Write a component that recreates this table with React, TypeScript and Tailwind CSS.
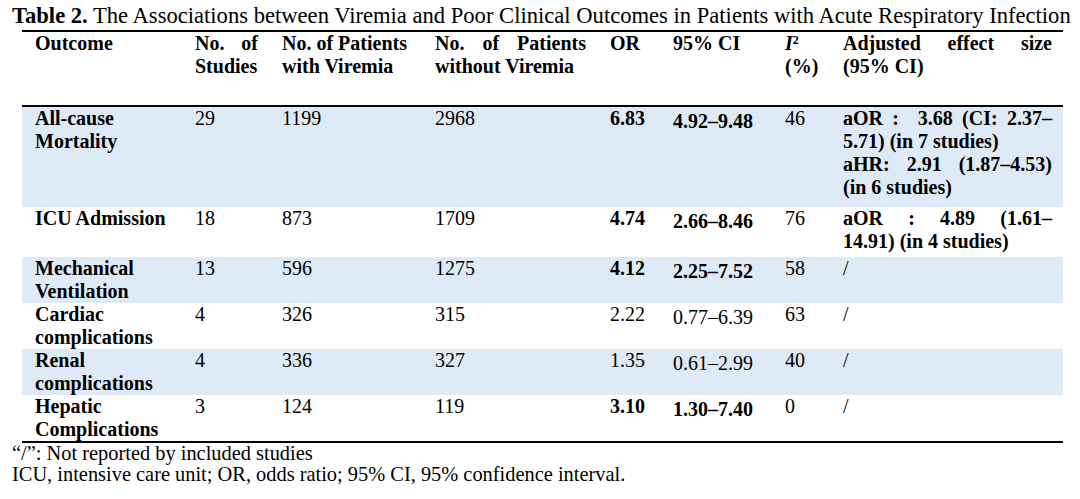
const shade = "bg-[#deeaf6]";

// one line stretched to the full cell width
const J = ({ children }: { children: React.ReactNode }) => (
  <span className="block text-justify [text-align-last:justify]">{children}</span>
);
const L = ({ children }: { children: React.ReactNode }) => <span className="block">{children}</span>;

const td = "align-top pl-[13px] pr-[11px] pt-0 pb-0";

interface Row {
  outcome: string[];
  studies: string;
  withV: string;
  withoutV: string;
  or: string;
  ci: string;
  sig: boolean;
  i2: string;
  adjusted: React.ReactNode;
  h: string;
  shaded: boolean;
}

const rows: Row[] = [
  {
    outcome: ["All-cause", "Mortality"],
    studies: "29",
    withV: "1199",
    withoutV: "2968",
    or: "6.83",
    ci: "4.92–9.48",
    sig: true,
    i2: "46",
    adjusted: (
      <div className="font-bold">
        <J>aOR :&nbsp; 3.68 (CI: 2.37–</J>
        <L>5.71) (in 7 studies)</L>
        <J>aHR: 2.91 (1.87–4.53)</J>
        <L>(in 6 studies)</L>
      </div>
    ),
    h: "h-[101px]",
    shaded: true,
  },
  {
    outcome: ["ICU Admission"],
    studies: "18",
    withV: "873",
    withoutV: "1709",
    or: "4.74",
    ci: "2.66–8.46",
    sig: true,
    i2: "76",
    adjusted: (
      <div className="font-bold">
        <J>aOR : 4.89 (1.61–</J>
        <L>14.91) (in 4 studies)</L>
      </div>
    ),
    h: "h-[50px]",
    shaded: false,
  },
  {
    outcome: ["Mechanical", "Ventilation"],
    studies: "13",
    withV: "596",
    withoutV: "1275",
    or: "4.12",
    ci: "2.25–7.52",
    sig: true,
    i2: "58",
    adjusted: "/",
    h: "h-[45px]",
    shaded: true,
  },
  {
    outcome: ["Cardiac", "complications"],
    studies: "4",
    withV: "326",
    withoutV: "315",
    or: "2.22",
    ci: "0.77–6.39",
    sig: false,
    i2: "63",
    adjusted: "/",
    h: "h-[46px]",
    shaded: false,
  },
  {
    outcome: ["Renal", "complications"],
    studies: "4",
    withV: "336",
    withoutV: "327",
    or: "1.35",
    ci: "0.61–2.99",
    sig: false,
    i2: "40",
    adjusted: "/",
    h: "h-[45px]",
    shaded: true,
  },
  {
    outcome: ["Hepatic", "Complications"],
    studies: "3",
    withV: "124",
    withoutV: "119",
    or: "3.10",
    ci: "1.30–7.40",
    sig: true,
    i2: "0",
    adjusted: "/",
    h: "h-[46px]",
    shaded: false,
  },
];

export default function App() {
  return (
    <div className="min-h-[499px] w-[1080px] bg-white pl-[12px] pt-[4px] text-black font-['Liberation_Serif',serif]">
      <p className="text-[22.6px] leading-[24px] whitespace-nowrap">
        <span className="font-bold">Table 2.</span> The Associations between Viremia and Poor Clinical Outcomes in
        Patients with Acute Respiratory Infection
      </p>

      <div className="ml-[10px] mt-[2px] w-[1041px] border-y-2 border-black">
        <table className="w-full table-fixed border-collapse text-[20px] leading-[23px]">
          <colgroup>
            <col className="w-[160px]" />
            <col className="w-[87px]" />
            <col className="w-[153px]" />
            <col className="w-[175px]" />
            <col className="w-[63px]" />
            <col className="w-[112px]" />
            <col className="w-[58px]" />
            <col className="w-[233px]" />
          </colgroup>
          <thead>
            <tr className="h-[74px] border-b-2 border-black text-left font-bold">
              <th className={td}>Outcome</th>
              <th className={td}>
                <J>No. of</J>
                <L>Studies</L>
              </th>
              <th className={td}>
                <L>No. of Patients</L>
                <L>with Viremia</L>
              </th>
              <th className={td}>
                <J>No. of Patients</J>
                <L>without Viremia</L>
              </th>
              <th className={td}>OR</th>
              <th className={td}>95% CI</th>
              <th className={`${td} pr-0`}>
                <L>
                  <i>I</i>
                  <sup className="text-[12px]">2</sup>
                </L>
                <L>(%)</L>
              </th>
              <th className={td}>
                <J>Adjusted effect size</J>
                <L>(95% CI)</L>
              </th>
            </tr>
          </thead>
          <tbody>
            {rows.map((r) => (
              <tr key={r.outcome.join(" ")} className={`${r.h} ${r.shaded ? shade : ""}`}>
                <td className={`${td} font-bold`}>
                  {r.outcome.map((o) => (
                    <L key={o}>{o}</L>
                  ))}
                </td>
                <td className={td}>{r.studies}</td>
                <td className={td}>{r.withV}</td>
                <td className={td}>{r.withoutV}</td>
                <td className={`${td} ${r.sig ? "font-bold" : ""}`}>{r.or}</td>
                <td className={`${td} !pt-[3px] ${r.sig ? "font-bold" : ""}`}>{r.ci}</td>
                <td className={td}>{r.i2}</td>
                <td className={td}>{r.adjusted}</td>
              </tr>
            ))}
          </tbody>
        </table>
      </div>

      <div className="text-[20.4px] leading-[21px]">
        <p>“/”: Not reported by included studies</p>
        <p>ICU, intensive care unit; OR, odds ratio; 95% CI, 95% confidence interval.</p>
      </div>
    </div>
  );
}
